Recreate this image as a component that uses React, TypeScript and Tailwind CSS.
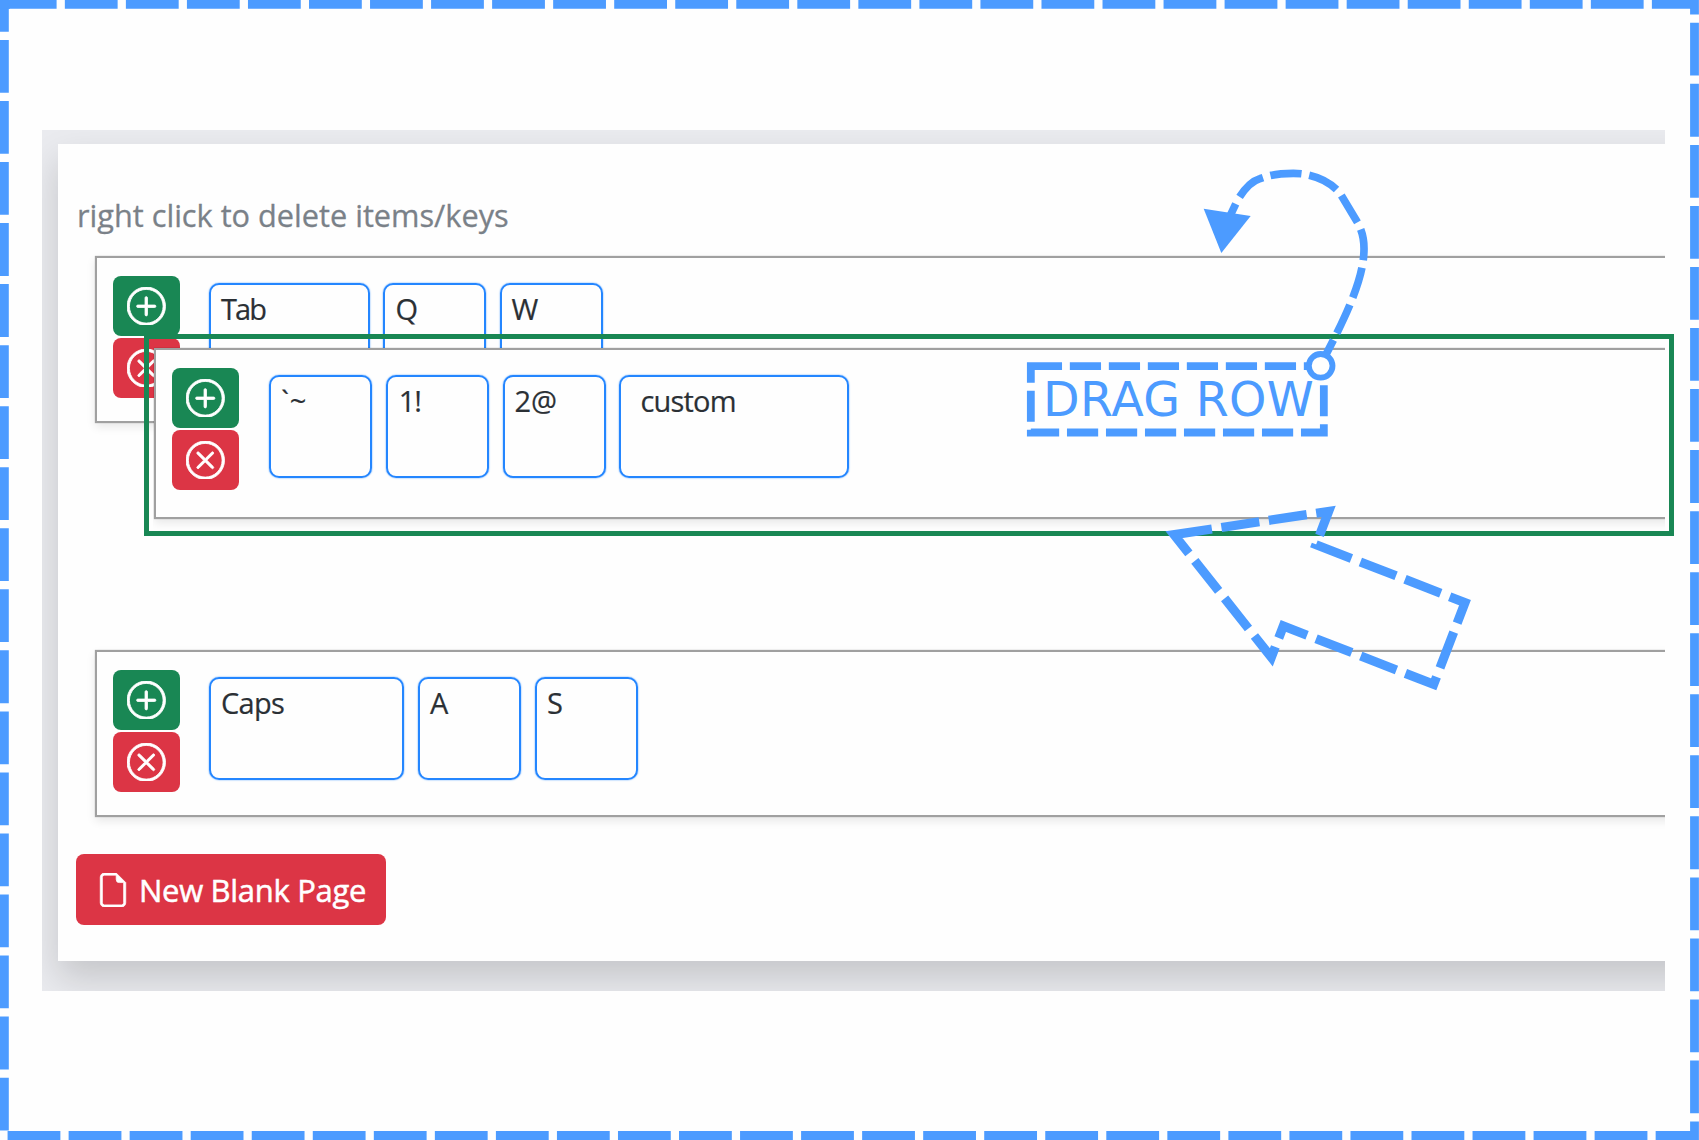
import { BsFileEarmark, BsPlusCircle, BsXCircle } from "react-icons/bs";

type KeyDef = { label: string; box: string; text?: string };

const topRow: KeyDef[] = [
  { label: "Tab", box: "w-[161px]", text: "tracking-[-1.9px]" },
  { label: "Q", box: "w-[103px]" },
  { label: "W", box: "w-[103px]", text: "-ml-[0.5px]" },
];

const draggedRow: KeyDef[] = [
  { label: "`~", box: "w-[103px]", text: "tracking-[0.8px]" },
  { label: "1!", box: "w-[103px]", text: "pl-px tracking-[-1px]" },
  { label: "2@", box: "w-[103px]", text: "tracking-[-0.2px]" },
  { label: "custom", box: "w-[230px]", text: "pl-[9px] tracking-[-0.8px]" },
];

const bottomRow: KeyDef[] = [
  { label: "Caps", box: "w-[195px]", text: "tracking-[-0.7px]" },
  { label: "A", box: "w-[103px]" },
  { label: "S", box: "w-[103px]" },
];

function Row({ keys, className, keysClassName }: { keys: KeyDef[]; className: string; keysClassName: string }) {
  return (
    <div
      className={`flex border-2 border-r-0 border-[#a0a0a0] bg-[#fefefe] pt-[18.4px] pl-[16px] shadow-[0_0_1px_rgba(0,0,0,0.3),0_4px_9px_rgba(0,0,0,0.09)] ${className}`}
    >
      <div className="flex flex-col gap-[2.2px]">
        <button className="flex h-[59.6px] w-[66.6px] items-center justify-center rounded-lg bg-[#198754] text-white">
          <BsPlusCircle size={38.5} strokeWidth={0.35} />
        </button>
        <button className="flex h-[59.6px] w-[66.6px] items-center justify-center rounded-lg bg-[#dc3545] text-white">
          <BsXCircle size={38.5} strokeWidth={0.35} />
        </button>
      </div>
      <div className={`mt-[6.6px] flex ${keysClassName}`}>
        {keys.map((k) => (
          <div
            key={k.label}
            className={`h-[103px] rounded-[10px] border-2 border-[#2486ff] pt-[4px] pl-[10px] text-[29px] leading-[40px] text-[#2b3035] shadow-[0_0_1.5px_#2486ff] [-webkit-text-stroke:0.2px] ${k.box}`}
          >
            <span className={k.text}>{k.label}</span>
          </div>
        ))}
      </div>
    </div>
  );
}

export default function App() {
  return (
    <div className="relative h-[1140px] w-[1699px] overflow-hidden bg-[#fefefe] pt-[130px] pl-[42px] font-['Open_Sans',sans-serif]">
      <div className="h-[861px] w-[1623px] overflow-hidden bg-[#eaebef] pt-[14px] pl-[16px]">
        <div className="h-[817px] w-[1700px] bg-[#fefefe] pt-[51px] pl-[19px] shadow-[0_17px_34px_rgba(0,0,0,0.16)]">
          <p className="h-[61px] text-[30.7px] leading-[40px] whitespace-nowrap text-[#7a8188] [-webkit-text-stroke:0.3px]">
            right click to delete items/keys
          </p>
          <Row keys={topRow} className="ml-[18px] h-[167px]" keysClassName="ml-[29.4px] gap-[13.5px]" />
          <Row keys={bottomRow} className="mt-[227px] ml-[18px] h-[167px]" keysClassName="ml-[29.4px] gap-[14px]" />
          <button className="mt-[37px] -ml-px flex h-[71px] w-[310px] items-center rounded-lg bg-[#dc3545] pl-[20px] text-white">
            <BsFileEarmark size={34} strokeWidth={0.35} />
            <span className="mt-[2px] ml-[9px] text-[31px] tracking-[-0.3px] whitespace-nowrap [-webkit-text-stroke:0.5px]">
              New Blank Page
            </span>
          </button>
        </div>
      </div>

      {/* Row being dragged over the list */}
      <div className="absolute top-[347px] left-[153px] h-[187px] w-[1512px] overflow-hidden pt-px pl-px">
        <Row keys={draggedRow} className="h-[171px] w-[1540px]" keysClassName="ml-[30.4px] gap-[13.8px]" />
      </div>
      <div className="absolute top-[334px] left-[144px] h-[202px] w-[1530px] border-[5px] border-[#198754]" />

      {/* Callout label */}
      <div className="absolute top-[363px] left-[1043px] text-[47.5px] leading-[74px] tracking-[0.3px] whitespace-nowrap text-[#4c9bff] font-['DejaVu_Sans',sans-serif]">
        DRAG ROW
      </div>

      {/* Callout outline and curved arrow */}
      <svg className="absolute top-[140px] left-[1000px] h-[310px] w-[420px]" viewBox="0 0 1260 930" fill="none">
        <rect x="92.5" y="678.5" width="879" height="199" stroke="#4c9bff" strokeWidth="23.4" strokeDasharray="93.6 23.4" />
        <path
          d="M957 684 C1030 545 1093 420 1092 325 C1092 290 1083 265 1070 243 L1023 165 C1000 130 945 100 880 100 C835 100 810 105 780 116 C760 122 735 142 712 182 L688 232"
          stroke="#4c9bff"
          strokeWidth="23"
          strokeDasharray="93.6 23.4"
        />
        <path d="M611 206 L752 228 L664 339 Z" fill="#4c9bff" />
        <circle cx="962" cy="677.5" r="35.5" fill="#fefefe" stroke="#4c9bff" strokeWidth="17.5" />
      </svg>

      {/* Block arrow */}
      <svg className="absolute top-[480px] left-[1140px] h-[220px] w-[360px]" viewBox="0 0 1080 660" fill="none">
        <path
          d="M102 164 L566 94 L528 194 L975 368 L881 613 L430 438 L394 532 Z"
          stroke="#4c9bff"
          strokeWidth="27.5"
          strokeMiterlimit="10"
          strokeDasharray="115 28.8"
        />
      </svg>

      {/* Dashed page frame */}
      <svg className="pointer-events-none absolute inset-0 h-[1140px] w-[1699px]" viewBox="0 0 1699 1140" fill="none">
        <path
          d="M3.8 4.4 H1694.5 V1135.5 H4.4 V0"
          stroke="#4c9bff"
          strokeWidth="8.8"
          strokeDasharray="52.8 8.24"
        />
        <path d="M0 4.4 H10" stroke="#4c9bff" strokeWidth="8.8" />
      </svg>
    </div>
  );
}
